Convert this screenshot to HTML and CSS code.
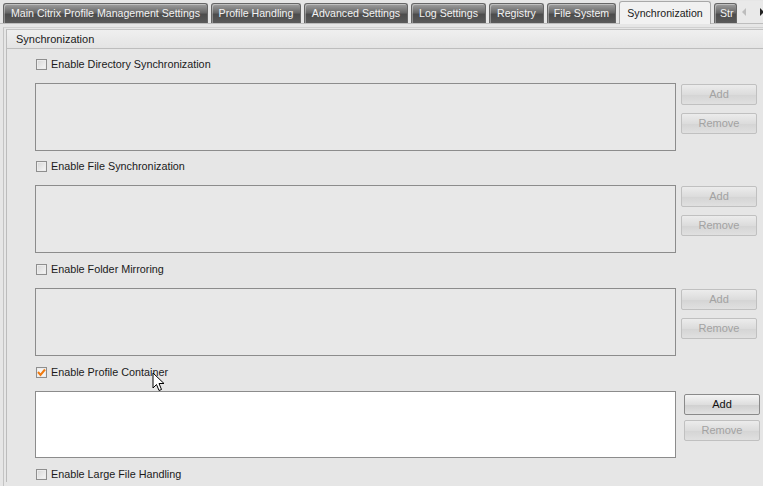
FILE: index.html
```html
<!DOCTYPE html>
<html>
<head>
<meta charset="utf-8">
<link rel="stylesheet" href="styles.css">
</head>
<body>
<div class="tabbar">
  <div class="tab t1">Main Citrix Profile Management Settings</div>
  <div class="tab t2">Profile Handling</div>
  <div class="tab t3">Advanced Settings</div>
  <div class="tab t4">Log Settings</div>
  <div class="tab t5">Registry</div>
  <div class="tab t6">File System</div>
  <div class="tab t7 active">Synchronization</div>
  <div class="tab t8 cut">Str</div>
  <div class="scroller">
    <svg width="28" height="14" viewBox="0 0 28 14"><path d="M9 3 L5 7 L9 11 Z" fill="#bdbdbd"/><path d="M23 3 L27 7 L23 11 Z" fill="#222"/></svg>
  </div>
</div>
<div class="page">
  <div class="group">
    <div class="group-head">Synchronization</div>
    <div class="content">
      <div class="section">
        <label class="check"><span class="box"></span>Enable Directory Synchronization</label>
        <div class="listrow">
          <div class="list"></div>
          <div class="btns"><div class="btn dis">Add</div><div class="btn dis">Remove</div></div>
        </div>
      </div>
      <div class="section">
        <label class="check"><span class="box"></span>Enable File Synchronization</label>
        <div class="listrow">
          <div class="list"></div>
          <div class="btns"><div class="btn dis">Add</div><div class="btn dis">Remove</div></div>
        </div>
      </div>
      <div class="section">
        <label class="check"><span class="box"></span>Enable Folder Mirroring</label>
        <div class="listrow">
          <div class="list"></div>
          <div class="btns"><div class="btn dis">Add</div><div class="btn dis">Remove</div></div>
        </div>
      </div>
      <div class="section">
        <label class="check"><span class="box checked"><svg width="9" height="9" viewBox="0 0 9 9"><path d="M1 4 L3.5 7 L8 1.5" fill="none" stroke="#f07a10" stroke-width="2"/></svg></span>Enable Profile Container</label>
        <div class="listrow">
          <div class="list on"></div>
          <div class="btns shift"><div class="btn">Add</div><div class="btn dis">Remove</div></div>
        </div>
      </div>
      <div class="section">
        <label class="check"><span class="box"></span>Enable Large File Handling</label>
      </div>
    </div>
  </div>
</div>
<svg class="cursor" width="16" height="22" viewBox="0 0 16 22"><path d="M1 1 L1 16 L4.5 12.5 L7 18.5 L9.5 17.5 L7 11.5 L12 11.5 Z" fill="#fff" stroke="#000" stroke-width="1" stroke-linejoin="miter"/></svg>
</body>
</html>
```
FILE: styles.css
```css
html, body { margin: 0; padding: 0; }
body {
  width: 763px; height: 486px; overflow: hidden;
  background: #e6e6e6;
  font-family: "Liberation Sans", sans-serif;
  font-size: 11px;
  color: #1a1a1a;
  position: relative;
}
.tabbar {
  display: flex; align-items: flex-end;
  height: 24px; padding-left: 3px;
  border-bottom: 1px solid #bdbdbd;
  box-sizing: border-box;
}
.tab {
  height: 20px; line-height: 19px;
  margin-right: 3px;
  color: #f2f2f2;
  background: linear-gradient(#a0a0a0, #686868 45%, #4c4c4c 55%, #5a5a5a);
  border: 1px solid #666;
  border-bottom: none;
  border-radius: 3px 3px 0 0;
  box-shadow: inset 1px 1px 0 rgba(255,255,255,0.35);
  white-space: nowrap;
  font-size: 10.6px;
  text-align: center;
  box-sizing: border-box;
  flex: none;
  overflow: hidden;
}
.t1 { width: 205px; }
.t2 { width: 90px; }
.t3 { width: 104px; }
.t4 { width: 75px; }
.t5 { width: 55px; }
.t6 { width: 69px; }
.t7 { width: 92px; }
.t8 { width: 23px; }
.tab.active {
  height: 23px; line-height: 22px;
  background: #f1f1f1; color: #1a1a1a;
  border-color: #a8a8a8;
  box-shadow: none;
  margin-bottom: -1px;
}
.tab.cut { text-align: left; padding-left: 5px; margin-right: 0; }
.scroller { width: 28px; height: 22px; display: flex; align-items: center; background: #e9e9e9; flex: none; }
.page {
  margin-top: 3px;
  margin-left: 3px;
  border-left: 1px solid #c4c4c4;
  border-top: 1px solid #d0d0d0;
  padding-left: 2px;
  height: 470px;
}
.group {
  border-left: 1px solid #bcbcbc;
  border-top: 1px solid #c2c2c2;
  margin-top: 1px;
}
.group-head {
  height: 17px; line-height: 17px;
  padding-top: 1px;
  padding-left: 9px;
  background: linear-gradient(#efefef, #e4e4e4);
  border-bottom: 1px solid #bdbdbd;
  font-size: 11px;
}
.content { padding: 7px 0 0 28px; }
.section { margin-bottom: 8px; }
.section:first-child { margin-bottom: 7px; }
.check {
  display: flex; align-items: center;
  height: 16px; margin-bottom: 11px;
  font-size: 10.8px;
}
.box {
  width: 11px; height: 11px; box-sizing: border-box;
  border: 1px solid #8e8e8e;
  background: linear-gradient(135deg, #d6d6d6, #f7f7f7);
  box-shadow: inset 0 0 0 1px #ececec;
  margin: 0 4px 0 1px;
  display: flex; align-items: center; justify-content: center;
}
.box.checked { background: #f4f4f4; }
.box svg { display: block; }
.listrow { display: flex; align-items: flex-start; }
.list {
  width: 641px; height: 68px; box-sizing: border-box;
  border: 1px solid #8c8c8c;
  background: #e8e8e8;
}
.list.on { background: #fff; height: 67px; }
.btns { margin-left: 5px; margin-top: 1px; display: flex; flex-direction: column; gap: 8px; }
.btns.shift { margin-left: 8px; margin-top: 3px; gap: 5px; }
.btn {
  width: 76px; height: 21px; box-sizing: border-box;
  border: 1px solid #8a8a8a;
  border-radius: 2px;
  background: linear-gradient(#f4f4f4, #dedede 50%, #cfcfcf 51%, #e2e2e2);
  text-align: center; line-height: 19px;
  font-size: 11px;
  color: #111;
}
.btn.dis { color: #a2a2a2; border-color: #c0c0c0; background: linear-gradient(#ececec, #dcdcdc 50%, #d4d4d4 51%, #e0e0e0); }
.cursor { position: absolute; left: 152px; top: 372px; }
```
